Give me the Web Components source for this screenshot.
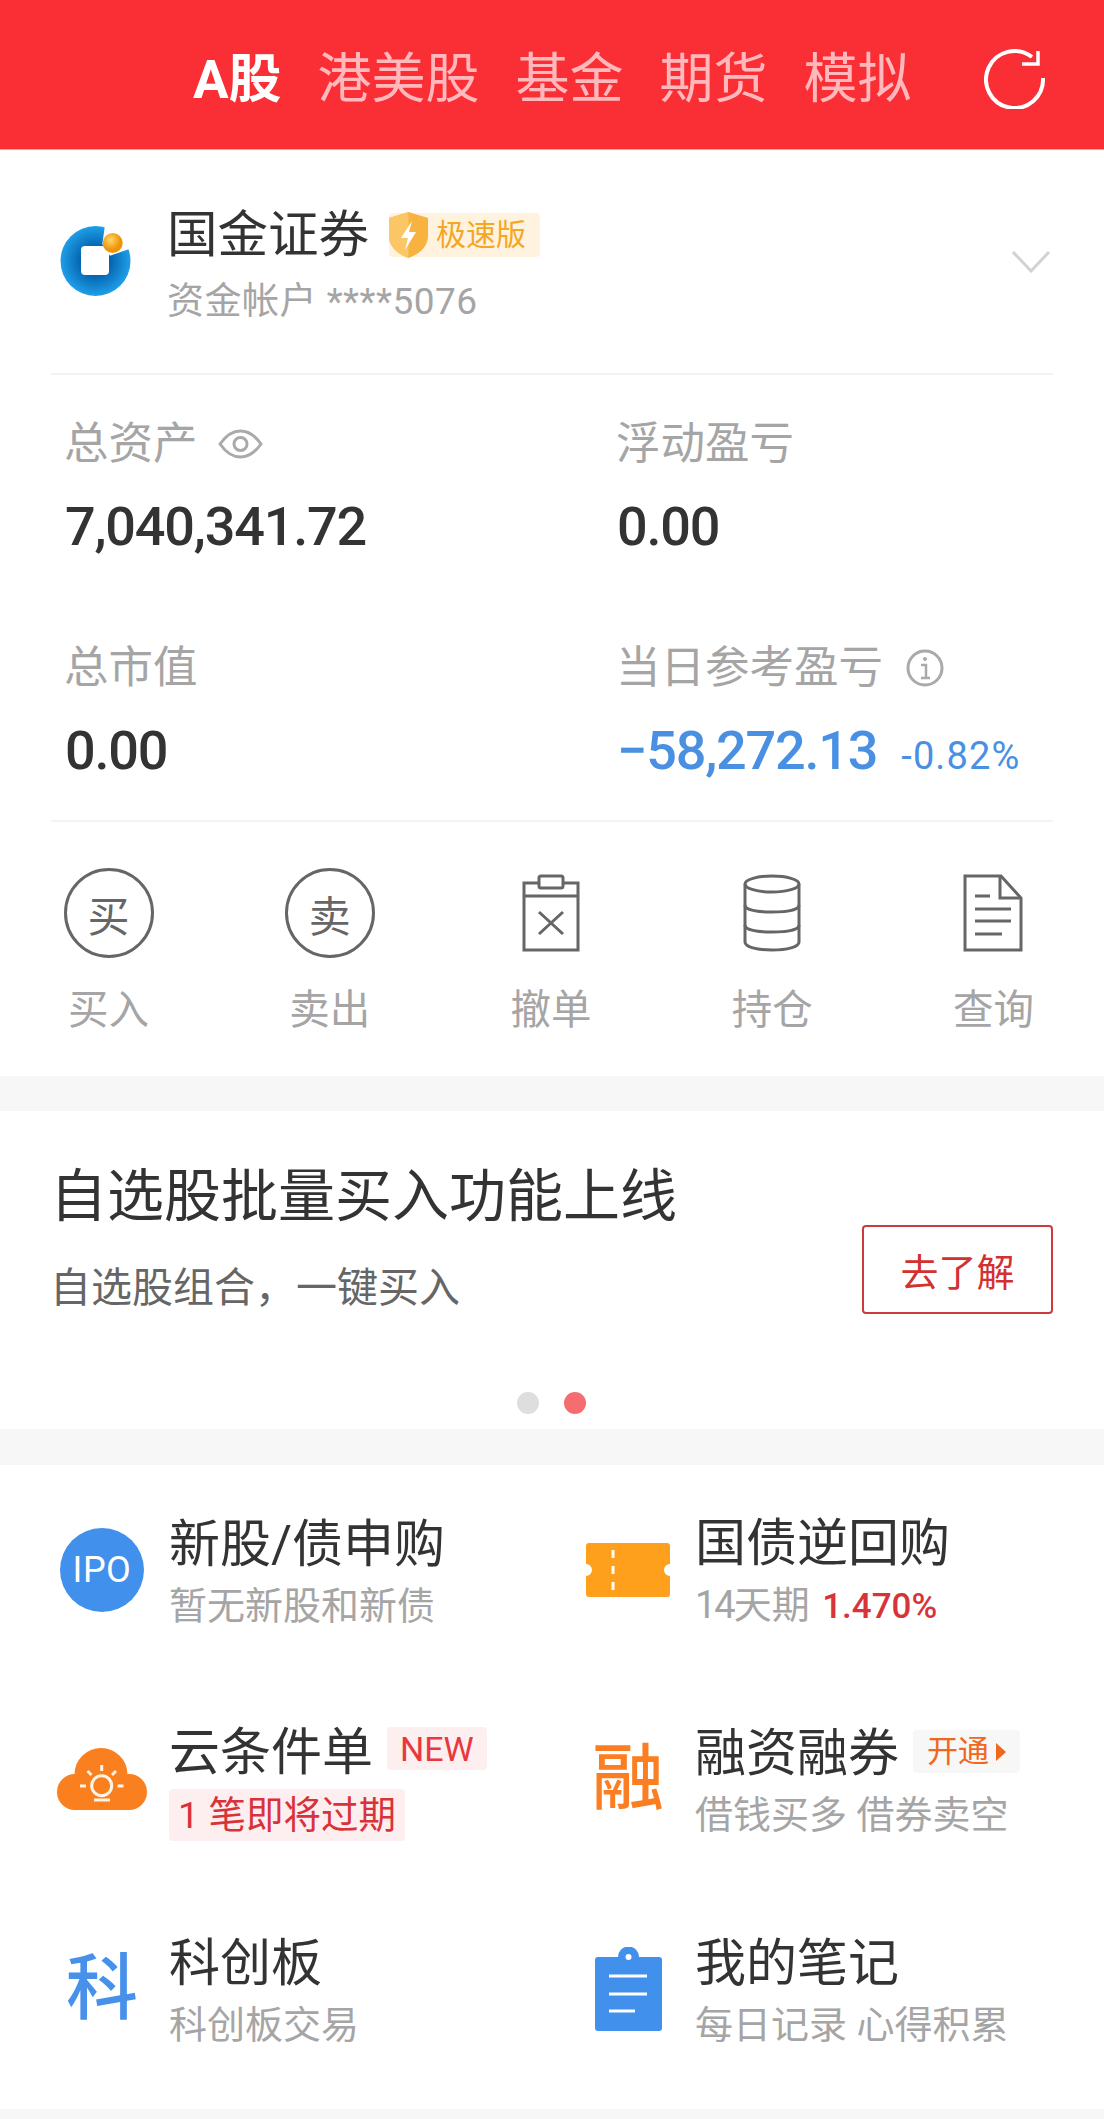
<!DOCTYPE html>
<html lang="zh-CN">
<head>
<meta charset="utf-8">
<title>交易</title>
<style>
    html, body { margin: 0; padding: 0; background: #fff; }
    body { width: 1104px; height: 2119px; overflow: hidden; font-family: Roboto, "Noto Sans CJK SC", sans-serif; color: #333; }
    .gap { display: block; background: #f7f7f7; }
</style>
</head>
<body>
<trade-header></trade-header>
<account-card></account-card>
<stat-grid>
    <stat-item label="总资产" icon="eye" value="7,040,341.72"></stat-item>
    <stat-item label="浮动盈亏" value="0.00"></stat-item>
    <stat-item label="总市值" value="0.00"></stat-item>
    <stat-item label="当日参考盈亏" icon="info" value="−58,272.13" pct="-0.82%"></stat-item>
</stat-grid>
<action-bar>
    <action-item label="买入" glyph="买"></action-item>
    <action-item label="卖出" glyph="卖"></action-item>
    <action-item label="撤单" icon="cancel"></action-item>
    <action-item label="持仓" icon="stack"></action-item>
    <action-item label="查询" icon="doc"></action-item>
</action-bar>
<div class="gap" style="height:35px"></div>
<promo-banner></promo-banner>
<div class="gap" style="height:36px"></div>
<feature-grid>
    <feature-item>
        <icon-ipo slot="icon"></icon-ipo>
        <span slot="title">新股/债申购</span>
        <span slot="sub">暂无新股和新债</span>
    </feature-item>
    <feature-item>
        <svg slot="icon" width="84" height="54" viewBox="0 0 84 54">
            <path d="M3 0H81a3 3 0 0 1 3 3V21a6 6 0 0 0 0 12V51a3 3 0 0 1-3 3H3a3 3 0 0 1-3-3V33a6 6 0 0 0 0-12V3a3 3 0 0 1 3-3Z" fill="#ffa01c"/>
            <path d="M27 7v8M27 23v8M27 39v8" stroke="#fff" stroke-width="3" fill="none"/>
        </svg>
        <span slot="title">国债逆回购</span>
        <span slot="sub"><span style="letter-spacing:-2px">14</span>天期 <span style="color:#d9333a;font-size:35px;font-weight:500;margin-left:3px">1.470%</span></span>
    </feature-item>
    <feature-item>
        <svg slot="icon" width="90" height="62" viewBox="0 0 90 62">
            <g fill="#f97f1f">
                <circle cx="18" cy="44" r="18"/><circle cx="72" cy="44" r="18"/><circle cx="44" cy="26.500" r="26.500"/>
                <rect x="18" y="30" width="54" height="32"/>
            </g>
            <g fill="none" stroke="#fff3e4" stroke-width="3">
                <circle cx="44.700" cy="37.700" r="10"/>
                <path d="M44.700 17v6M30.500 23l4 4M59 23l-4 4M23 38h6M60.500 38h6M37 52h16"/>
            </g>
        </svg>
        <span slot="title">云条件单</span>
        <tag-pill slot="badge" tone="red">NEW</tag-pill>
        <tag-pill slot="sub" tone="warn">1 笔即将过期</tag-pill>
    </feature-item>
    <feature-item>
        <span slot="icon" style="font-size:72px;line-height:72px;font-weight:500;color:#fb7f22">融</span>
        <span slot="title">融资融券</span>
        <tag-pill slot="badge" tone="open">开通<svg width="10" height="18" viewBox="0 0 10 18" style="margin-left:7px"><path d="M0 0L10 9L0 18Z" fill="#f0671e"/></svg></tag-pill>
        <span slot="sub">借钱买多 借券卖空</span>
    </feature-item>
    <feature-item>
        <span slot="icon" style="font-size:72px;line-height:72px;font-weight:500;color:#4791ea">科</span>
        <span slot="title">科创板</span>
        <span slot="sub">科创板交易</span>
    </feature-item>
    <feature-item>
        <svg slot="icon" width="67" height="84" viewBox="0 0 67 84">
            <path d="M3 10H23a10.500 10.500 0 0 1 21 0H64a3 3 0 0 1 3 3V81a3 3 0 0 1-3 3H3a3 3 0 0 1-3-3V13a3 3 0 0 1 3-3Z" fill="#4191ec"/>
            <circle cx="33.500" cy="10" r="3" fill="#fff"/>
            <path d="M14 29H52M14 47H52M14 64H40" stroke="#fff" stroke-width="3" fill="none"/>
        </svg>
        <span slot="title">我的笔记</span>
        <span slot="sub">每日记录 心得积累</span>
    </feature-item>
</feature-grid>
<div class="gap" style="height:10px"></div>

<script>
// shared helper, every element here just sets its html once
class ShadowBase extends HTMLElement {
    render(html) {
        const template = document.createElement('template');
        template.innerHTML = html;
        this.attachShadow({ mode: 'open' });
        this.shadowRoot.appendChild(template.content.cloneNode(true));
    }
}

// red bar on top with the market tabs
class TradeHeader extends ShadowBase {
    constructor() {
        super();
        const tabs = ['港美股', '基金', '期货', '模拟'];
        this.render(`
            <style>
                :host { display: flex; align-items: center; height: 150px; box-sizing: border-box;
                        background: #f92f35; padding: 10px 58px 0 193px; border-bottom: 1px solid #f9a0a5; }
                nav { display: flex; gap: 36px; font-size: 54px; line-height: 70px; color: #ffb9bd; }
                .on { color: #fff; font-weight: 700; font-size: 53px; }
                svg { margin: -3px 0 0 auto; }
            </style>
            <nav><span class="on">A股</span>${tabs.map((t) => `<span>${t}</span>`).join('')}</nav>
            <svg width="62" height="62" viewBox="0 0 62 62" fill="none" stroke="#fff" stroke-width="4">
                <path d="M48 10A28.500 28.500 0 1 0 59 31"/>
                <path d="M54 4V17H38" stroke-width="3.500"/>
            </svg>
        `);
    }
}

// broker row, logo + name + account number
class AccountCard extends ShadowBase {
    constructor() {
        super();
        this.render(`
            <style>
                :host { display: flex; align-items: center; height: 225px; box-sizing: border-box; margin: 0 51px;
                        padding: 0 3px 0 9px; border-bottom: 2px solid #f3f3f3; }
                .logo { flex: none; margin-right: 35px; margin-top: -2px; }
                .info { flex: 1; padding-top: 5px; }
                .name { display: flex; align-items: center; font-size: 50.500px; line-height: 66px; color: #333; }
                .ver { display: flex; align-items: center; height: 44px; margin-left: 20px; padding-right: 14px;
                       background: #fff3e0; border-radius: 4px; font-size: 30px; color: #f5a623; }
                .ver svg { margin: 0 8px 0 0; }
                .acct { font-size: 37px; letter-spacing: 0.5px; line-height: 50px; color: #a5a5a5; margin-top: 9px; }
                .chev { flex: none; }
            </style>
            <svg class="logo" width="72" height="72" viewBox="0 0 72 72">
                <defs>
                    <radialGradient id="ring"><stop offset="0.300" stop-color="#0058a6"/><stop offset="1" stop-color="#1f9fe8"/></radialGradient>
                    <radialGradient id="ball" cx="0.400" cy="0.350"><stop offset="0" stop-color="#ffd668"/><stop offset="1" stop-color="#ee9306"/></radialGradient>
                </defs>
                <circle cx="35.500" cy="36" r="35" fill="url(#ring)"/>
                <path d="M45 0L42.300 19L50 30.700L72 23V0Z" fill="#fff"/>
                <rect x="21" y="21" width="28" height="29" rx="4" fill="#fff"/>
                <circle cx="52.700" cy="18" r="10" fill="url(#ball)"/>
            </svg>
            <div class="info">
                <div class="name">国金证券
                    <span class="ver">
                        <svg width="39" height="46" viewBox="0 0 39 46">
                            <path d="M19.500 0L39 6V24C39 36 28 43 19.500 46C11 43 0 36 0 24V6Z" fill="#f8b23f"/>
                            <path d="M19.500 0L0 6V24C0 36 11 43 19.500 46Z" fill="#fbc766"/>
                            <path d="M23 9L12 26H19L16 38L27 20H20Z" fill="#fff"/>
                        </svg>极速版</span>
                </div>
                <div class="acct">资金帐户 ****5076</div>
            </div>
            <svg class="chev" width="38" height="22" viewBox="0 0 38 22" fill="none" stroke="#d2d2d2" stroke-width="3"><path d="M1 1L19 20L37 1"/></svg>
        `);
    }
}

// 2 x 2 money figures
class StatGrid extends ShadowBase {
    constructor() {
        super();
        this.render(`
            <style>
                :host { display: grid; grid-template-columns: 552px 1fr; grid-template-rows: 224px 221px;
                        margin: 0 51px; padding-left: 14px; border-bottom: 2px solid #f3f3f3; }
            </style>
            <slot></slot>
        `);
    }
}

class StatItem extends ShadowBase {
    constructor() {
        super();
        const icons = {
            eye: `<svg width="45" height="30" viewBox="0 0 45 30" fill="none" stroke="#aaa" stroke-width="3"><path d="M2 15C9 5 15 2 22.500 2S36 5 43 15C36 25 30 28 22.500 28S9 25 2 15Z"/><circle cx="22.500" cy="15" r="6.500"/></svg>`,
            info: `<svg style="margin-left:3px" width="38" height="38" viewBox="0 0 38 38" fill="none" stroke="#aaa" stroke-width="3"><circle cx="19" cy="19" r="17"/><path d="M15 16H20V29M15 29H24" stroke-width="2.500"/><circle cx="19" cy="10" r="1.500" fill="#aaa" stroke-width="1"/></svg>`,
        };
        const icon = icons[this.getAttribute('icon')] || '';
        const pct = this.getAttribute('pct');
        this.render(`
            <style>
                :host { display: block; padding-top: 39px; }
                .label { display: flex; align-items: center; gap: 20px; margin-left: -1px; font-size: 44.500px; line-height: 60px; color: #a5a5a5; }
                .value { display: flex; align-items: baseline; margin-top: 23px; font-size: 54px; letter-spacing: -1.200px; line-height: 60px;
                         font-weight: 500; color: ${pct ? '#4a90e2' : '#333'}; }
                .pct { font-size: 38px; letter-spacing: 1.100px; font-weight: 400; margin-left: 24px; }
            </style>
            <div class="label">${this.getAttribute('label')}${icon}</div>
            <div class="value">${this.getAttribute('value')}${pct ? `<span class="pct">${pct}</span>` : ''}</div>
        `);
    }
}

// 买入 卖出 etc, five even columns
class ActionBar extends ShadowBase {
    constructor() {
        super();
        this.render(`
            <style>
                :host { display: grid; grid-template-columns: repeat(5, 1fr); height: 254px; margin-left: -2px; }
            </style>
            <slot></slot>
        `);
    }
}

class ActionItem extends ShadowBase {
    constructor() {
        super();
        const icons = {
            cancel: `<svg width="58" height="78" viewBox="0 0 58 78" fill="none" stroke="#666" stroke-width="3">
                <path d="M17 9H2V76H56V9H41M2 22H56"/><rect x="17" y="2" width="24" height="12" rx="2"/><path d="M17 38L41 60M41 38L17 60"/></svg>`,
            stack: `<svg width="58" height="78" viewBox="0 0 58 78" fill="none" stroke="#666" stroke-width="3">
                <ellipse cx="29" cy="10" rx="27" ry="8"/><path d="M2 10V68C2 73 14 76 29 76S56 73 56 68V10"/>
                <path d="M2 31C2 36 14 38 29 38S56 36 56 31M2 51C2 56 14 58 29 58S56 56 56 51"/></svg>`,
            doc: `<svg width="60" height="78" viewBox="0 0 60 78" fill="none" stroke="#666" stroke-width="3">
                <path d="M2 2H38L58 24V76H2Z"/><path d="M37 2V24H58"/><path d="M12 22H27M12 35H48M12 47H48M12 60H39"/></svg>`,
        };
        const glyph = this.getAttribute('glyph');
        const art = glyph ? `<span class="round">${glyph}</span>` : icons[this.getAttribute('icon')];
        this.render(`
            <style>
                :host { display: flex; flex-direction: column; align-items: center; padding-top: 46px; }
                .art { display: flex; align-items: center; justify-content: center; height: 90px; }
                .round { display: flex; align-items: center; justify-content: center; width: 90px; height: 90px;
                         box-sizing: border-box; border: 3px solid #666; border-radius: 50%; font-size: 42px; color: #666; }
                .label { margin-top: 27px; font-size: 40.500px; line-height: 50px; color: #a5a5a5; }
            </style>
            <div class="art">${art}</div>
            <div class="label">${this.getAttribute('label')}</div>
        `);
    }
}

class PromoBanner extends ShadowBase {
    constructor() {
        super();
        this.render(`
            <style>
                :host { display: block; height: 318px; box-sizing: border-box; padding: 47px 51px 0 50px; }
                .row { display: flex; justify-content: space-between; }
                h2 { margin: 0; font-size: 57px; line-height: 78px; font-weight: 400; color: #333; }
                p { margin: 24px 0 0; font-size: 41px; line-height: 56px; color: #666; }
                button { align-self: flex-start; width: 191px; height: 89px; margin-top: 67px; padding: 0; background: #fff;
                         border: 2px solid #ce3a3c; border-radius: 4px; font: inherit; font-size: 38px; color: #d2312f; }
                .dots { display: flex; justify-content: center; gap: 25px; margin-top: 76px; padding-right: 1px; }
                i { width: 22px; height: 22px; border-radius: 50%; background: #dedede; }
                i + i { background: #f56d70; }
            </style>
            <div class="row">
                <div><h2>自选股批量买入功能上线</h2><p>自选股组合，一键买入</p></div>
                <button>去了解</button>
            </div>
            <div class="dots"><i></i><i></i></div>
        `);
    }
}

// bottom list of entries, rows are not quite even in the original
class FeatureGrid extends ShadowBase {
    constructor() {
        super();
        this.render(`
            <style>
                :host { display: grid; grid-template-columns: 526px 1fr; grid-template-rows: 216px 202px 218px;
                        padding: 0 0 8px 57px; }
            </style>
            <slot></slot>
        `);
    }
}

class FeatureItem extends ShadowBase {
    constructor() {
        super();
        this.render(`
            <style>
                :host { display: flex; align-items: center; height: 100%; }
                .icon { flex: none; display: flex; align-items: center; justify-content: center; width: 90px; margin: -6px 22px 0 0; }
                .top { display: flex; align-items: center; gap: 14px; font-size: 51px; line-height: 60px; color: #333; }
                .sub { margin-top: 6px; font-size: 38px; line-height: 50px; color: #a5a5a5; }
            </style>
            <div class="icon"><slot name="icon"></slot></div>
            <div>
                <div class="top"><slot name="title"></slot><slot name="badge"></slot></div>
                <div class="sub"><slot name="sub"></slot></div>
            </div>
        `);
    }
}

class IconIpo extends ShadowBase {
    constructor() {
        super();
        this.render(`
            <style>
                :host { display: flex; align-items: center; justify-content: center; width: 84px; height: 84px; border-radius: 50%;
                        background: #4191ec; color: #fff; font-size: 36px; letter-spacing: 0.500px; }
            </style>
            IPO
        `);
    }
}

// small coloured pill, tone picks the colours
class TagPill extends ShadowBase {
    constructor() {
        super();
        const tones = {
            red: 'background:#fdeef0;color:#e8383d;font-size:34px;height:43px;padding:0 13px;margin-bottom:9px;',
            open: 'background:#f7f7f7;color:#f0671e;font-size:31px;height:43px;padding:0 14px;margin-bottom:5px;',
            warn: 'background:#fdeef0;color:#d9333a;font-size:37.500px;height:52px;padding:0 9px;',
        };
        this.render(`
            <style>
                :host { display: inline-flex; align-items: center; border-radius: 4px; ${tones[this.getAttribute('tone')]} }
            </style>
            <slot></slot>
        `);
    }
}

customElements.define('trade-header', TradeHeader);
customElements.define('account-card', AccountCard);
customElements.define('stat-grid', StatGrid);
customElements.define('stat-item', StatItem);
customElements.define('action-bar', ActionBar);
customElements.define('action-item', ActionItem);
customElements.define('promo-banner', PromoBanner);
customElements.define('feature-grid', FeatureGrid);
customElements.define('feature-item', FeatureItem);
customElements.define('icon-ipo', IconIpo);
customElements.define('tag-pill', TagPill);
</script>
</body>
</html>
